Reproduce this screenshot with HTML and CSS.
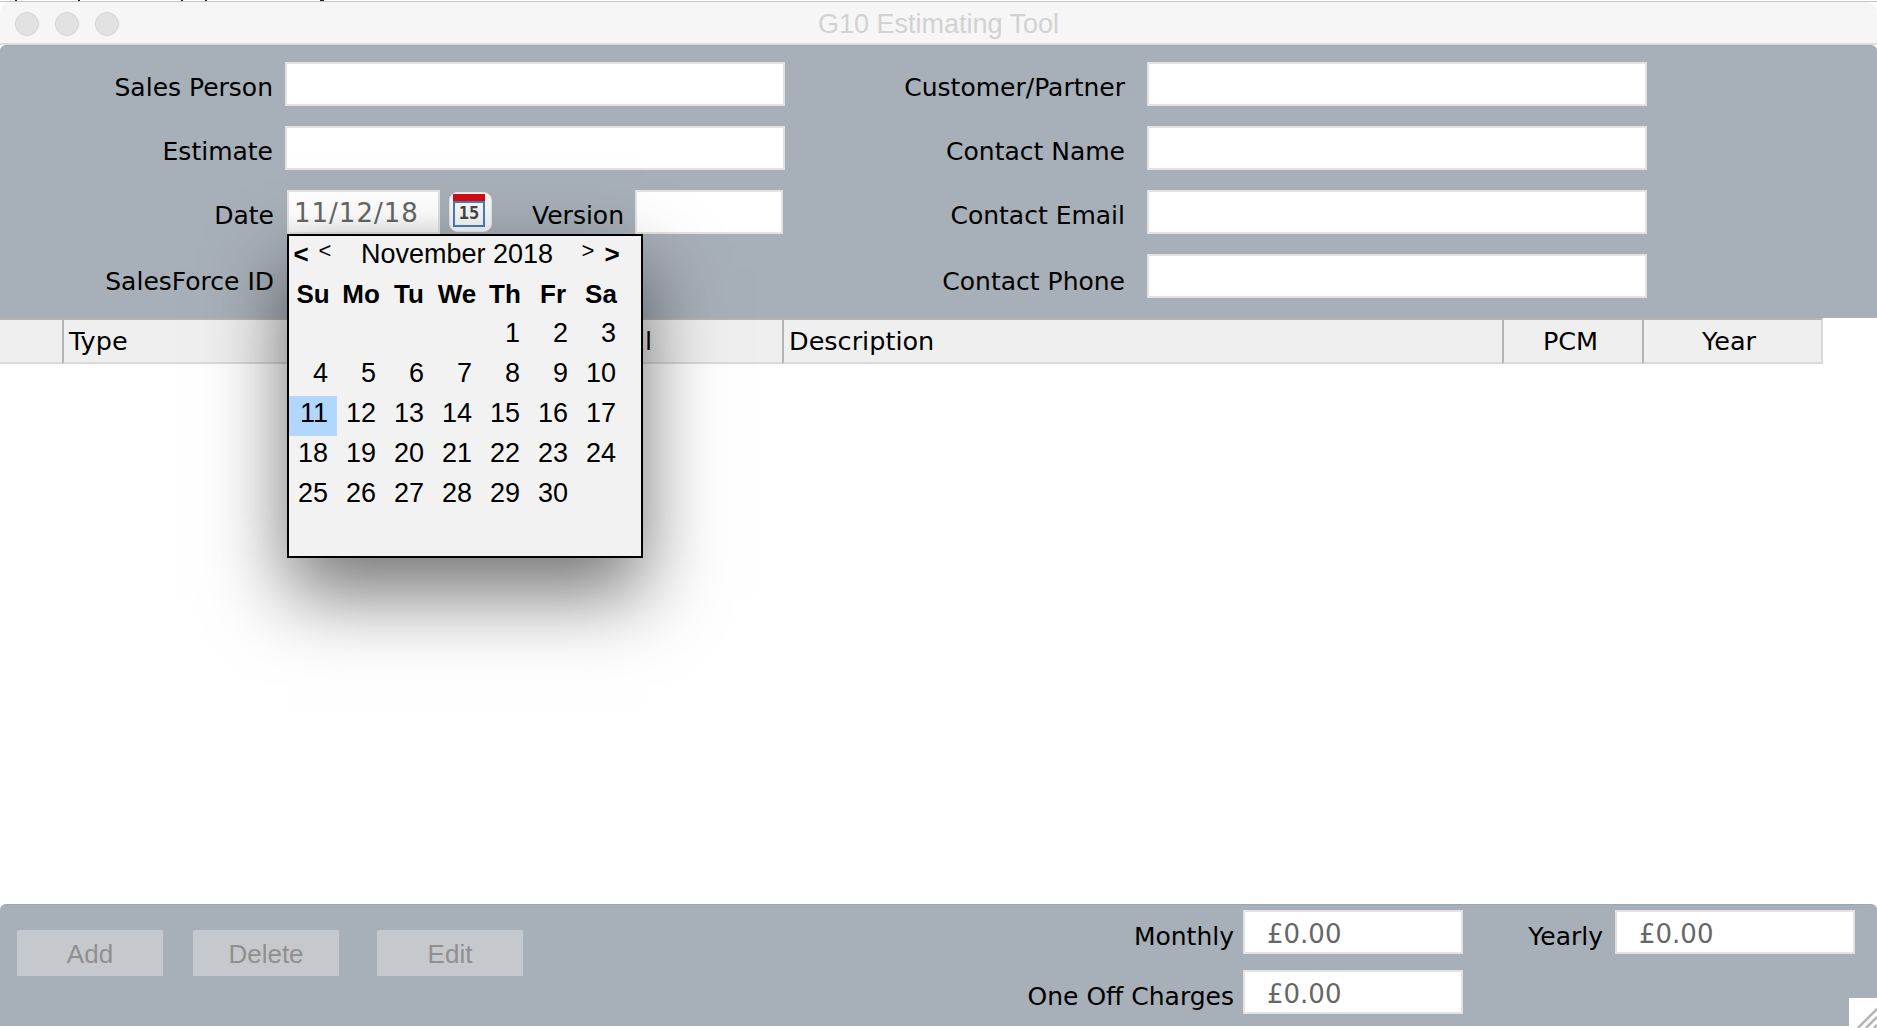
FILE: index.html
```html
<!DOCTYPE html>
<html lang="en">
<head>
<meta charset="utf-8">
<title>G10 Estimating Tool</title>
<link rel="stylesheet" href="styles.css">
</head>
<body>
<div class="window">
  <div class="topstrip"></div>
  <header class="titlebar">
    <div class="lights"><span class="light"></span><span class="light"></span><span class="light"></span></div>
    <div class="title">G10 Estimating Tool</div>
  </header>

  <section class="top-panel">
    <div class="form-col">
      <div class="row"><label class="lbl lbl-main">Sales Person</label><div class="field field-wide"></div></div>
      <div class="row"><label class="lbl lbl-main">Estimate</label><div class="field field-wide"></div></div>
      <div class="row">
        <label class="lbl lbl-main">Date</label>
        <div class="field field-date">11/12/18</div>
        <button class="cal-btn" aria-label="Calendar">
          <svg width="43" height="40" viewBox="0 0 43 40">
            <rect x="0.5" y="0.5" width="42" height="39" rx="8" fill="#f8f8f8" stroke="#e6e6e6"/>
            <rect x="4" y="2" width="32" height="8" fill="#d40a14"/>
            <rect x="5" y="10" width="30" height="24" fill="#f8f8f8" stroke="#4a7cc4" stroke-width="2"/>
            <text x="20" y="27" text-anchor="middle" class="cal-num">15</text>
          </svg>
        </button>
        <label class="lbl lbl-version">Version</label>
        <div class="field field-version"></div>
      </div>
      <div class="row row-last"><label class="lbl lbl-main">SalesForce ID</label></div>
    </div>
    <div class="form-col form-right">
      <div class="row"><label class="lbl lbl-right">Customer/Partner</label><div class="field field-wide"></div></div>
      <div class="row"><label class="lbl lbl-right">Contact Name</label><div class="field field-wide"></div></div>
      <div class="row"><label class="lbl lbl-right">Contact Email</label><div class="field field-wide"></div></div>
      <div class="row row-last"><label class="lbl lbl-right">Contact Phone</label><div class="field field-wide"></div></div>
    </div>
  </section>

  <section class="table-area">
    <div class="thead">
      <div class="th th-sel"></div>
      <div class="th th-type">Type</div>
      <div class="th th-detail">Detail</div>
      <div class="th th-desc">Description</div>
      <div class="th th-pcm">PCM</div>
      <div class="th th-year">Year</div>
    </div>
  </section>

  <footer class="bottom-panel">
    <div class="actions">
      <button class="btn">Add</button>
      <button class="btn">Delete</button>
      <button class="btn">Edit</button>
    </div>
    <div class="totals">
      <label class="lbl lbl-total">Monthly</label><div class="field field-total">£0.00</div>
      <label class="lbl lbl-yearly">Yearly</label><div class="field field-yearly">£0.00</div>
      <label class="lbl lbl-total">One Off Charges</label><div class="field field-total">£0.00</div>
    </div>
    <div class="grip">
      <svg width="28" height="30" viewBox="0 0 28 30"><path d="M9 30 L28 11 M17 30 L28 19 M25 30 L28 27" stroke="#b5b5b5" stroke-width="2.5" fill="none"/></svg>
    </div>
  </footer>

  <div class="popup">
    <div class="pop-head">
      <span class="nav nav-strong">&lt;</span><span class="nav nav-light">&lt;</span>
      <span class="month">November 2018</span>
      <span class="nav nav-light nav-next">&gt;</span><span class="nav nav-strong">&gt;</span>
    </div>
    <div class="cal-grid">
      <div class="dow">Su</div><div class="dow">Mo</div><div class="dow">Tu</div><div class="dow">We</div><div class="dow">Th</div><div class="dow">Fr</div><div class="dow">Sa</div>
      <div class="day"></div><div class="day"></div><div class="day"></div><div class="day"></div><div class="day">1</div><div class="day">2</div><div class="day">3</div>
      <div class="day">4</div><div class="day">5</div><div class="day">6</div><div class="day">7</div><div class="day">8</div><div class="day">9</div><div class="day">10</div>
      <div class="day day-on">11</div><div class="day">12</div><div class="day">13</div><div class="day">14</div><div class="day">15</div><div class="day">16</div><div class="day">17</div>
      <div class="day">18</div><div class="day">19</div><div class="day">20</div><div class="day">21</div><div class="day">22</div><div class="day">23</div><div class="day">24</div>
      <div class="day">25</div><div class="day">26</div><div class="day">27</div><div class="day">28</div><div class="day">29</div><div class="day">30</div><div class="day"></div>
    </div>
  </div>
</div>
</body>
</html>
```

FILE: styles.css
```css
* { box-sizing: border-box; }
html, body { margin: 0; height: 100%; }
body { background: #fff; overflow: hidden; font-family: "DejaVu Sans", sans-serif; color: #000; }
.window {
  position: relative;
  height: 1028px;
  display: flex;
  flex-direction: column;
  background: #fff;
}
.topstrip {
  height: 2px;
  flex: none;
  background:
    linear-gradient(#222, #222) 15px 0 / 2px 1px no-repeat,
    linear-gradient(#222, #222) 78px 0 / 2px 1px no-repeat,
    linear-gradient(#222, #222) 181px 0 / 2px 1px no-repeat,
    linear-gradient(#222, #222) 205px 0 / 2px 1px no-repeat,
    linear-gradient(#222, #222) 320px 0 / 4px 1px no-repeat,
    linear-gradient(#fff 50%, #c4c4c4 50%);
}
.titlebar {
  height: 43px;
  flex: none;
  position: relative;
  display: flex;
  align-items: center;
  justify-content: center;
  padding-top: 4px;
  background: #f6f6f6;
  border-bottom: 2px solid #dcdcdc;
  border-radius: 10px 10px 0 0;
}
.lights { position: absolute; left: 15px; top: 10px; display: flex; gap: 16px; }
.light { width: 24px; height: 24px; border-radius: 50%; background: #e2e2e2; border: 1px solid #d2d2d2; }
.title { font: 27px "Liberation Sans", sans-serif; color: #d2d2d2; }

.top-panel {
  height: 273px;
  flex: none;
  display: flex;
  padding: 16px 0 0;
  background: #a7afb8;
  border-top: 1px solid #9ea6af;
  border-radius: 6px 6px 0 0;
}
.form-col { display: flex; flex-direction: column; gap: 20px; width: 785px; }
.form-right { width: 862px; }
.row { display: flex; align-items: center; height: 44px; }
.lbl { font-size: 25px; white-space: nowrap; text-align: right; padding-top: 6px; }
.row-last .lbl { padding-top: 10px; }
.lbl-main { width: 274px; margin-right: 12px; }
.lbl-right { width: 340px; margin-right: 22px; }
.lbl-version { width: 132px; margin-right: 11px; flex: none; }
.field { height: 44px; background: #fff; border: 2px solid #e2e2e2; flex: none; color: #666; font-size: 26px; }
.field-wide { width: 500px; }
.field-date { width: 153px; margin-left: 1px; padding: 6px 0 0 5px; letter-spacing: 1px; background: linear-gradient(#fff 60%, #f4f4f4); }
.field-version { width: 148px; }
.cal-btn { width: 43px; height: 40px; margin-left: 9px; padding: 0; border: 0; background: none; flex: none; display: block; }
.cal-btn svg { display: block; }
.cal-num { font: bold 17px "DejaVu Sans Mono", monospace; fill: #444; }

.table-area { flex: 1; background: #fff; }
.thead { display: flex; height: 46px; width: 1823px; }
.th {
  height: 46px;
  flex: none;
  background: #efefef;
  border-top: 2px solid #b4b4b4;
  border-left: 2px solid #b4b4b4;
  border-bottom: 2px solid #dadada;
  font-size: 25.5px;
  line-height: 43px;
  padding-left: 5px;
  white-space: nowrap;
}
.th-sel { width: 62px; border-left: 0; }
.th-type { width: 508px; }
.th-detail { width: 212px; }
.th-desc { width: 720px; }
.th-pcm { width: 140px; text-align: center; padding: 0 5px 0 0; }
.th-year { width: 181px; text-align: center; padding: 0 7px 0 0; border-right: 2px solid #dadada; }

.bottom-panel {
  height: 122px;
  flex: none;
  position: relative;
  display: flex;
  justify-content: space-between;
  background: #a7afb8;
  border-top: 1px solid #9ea6af;
  border-radius: 6px 6px 0 0;
  margin-bottom: 2px;
}
.actions { display: flex; gap: 30px; padding: 25px 0 0 17px; align-items: flex-start; }
.actions .btn:last-child { margin-left: 8px; }
.btn {
  width: 146px;
  height: 46px;
  border: 0;
  padding: 3px 0 0;
  background: #c5c9ce;
  color: #918f8d;
  font: 26px "Liberation Sans", sans-serif;
}
.totals {
  display: grid;
  grid-template-columns: 230px 220px 152px 240px;
  grid-auto-rows: 44px;
  row-gap: 16px;
  padding: 5px 22px 0 0;
  align-items: center;
}
.totals .lbl { padding-top: 8px; }
.lbl-total { padding-right: 9px; }
.lbl-yearly { padding-right: 12px; }
.field-total, .field-yearly { padding: 0 0 0 22px; line-height: 44px; }
.grip { position: absolute; right: 0; bottom: -2px; width: 28px; height: 30px; background: #fff; border: 0; }
.grip svg { display: block; }

.popup {
  position: absolute;
  left: 287px;
  top: 234px;
  width: 356px;
  height: 324px;
  background: #f2f2f2;
  border: 2px solid #000;
  box-shadow: 0 36px 75px rgba(0,0,0,.55);
  font-family: "Liberation Sans", sans-serif;
  font-size: 26px;
}
.pop-head { height: 36px; display: flex; align-items: center; line-height: 34px; padding-left: 0; }
.nav { display: block; width: 24px; text-align: center; }
.nav-strong { font-weight: bold; }
.nav-light { font-size: 22px; margin-top: -6px; }
.month { width: 202px; margin-left: 19px; text-align: center; white-space: nowrap; font-size: 27px; }
.nav-next { margin-left: 18px; }
.cal-grid { display: grid; grid-template-columns: repeat(7, 48px); grid-auto-rows: 40px; margin-top: 4px; }
.dow { font-weight: bold; text-align: center; line-height: 36px; }
.day { text-align: right; padding-right: 9px; line-height: 34px; font-size: 27px; }
.day-on { background: #b2d7ff; }
```
